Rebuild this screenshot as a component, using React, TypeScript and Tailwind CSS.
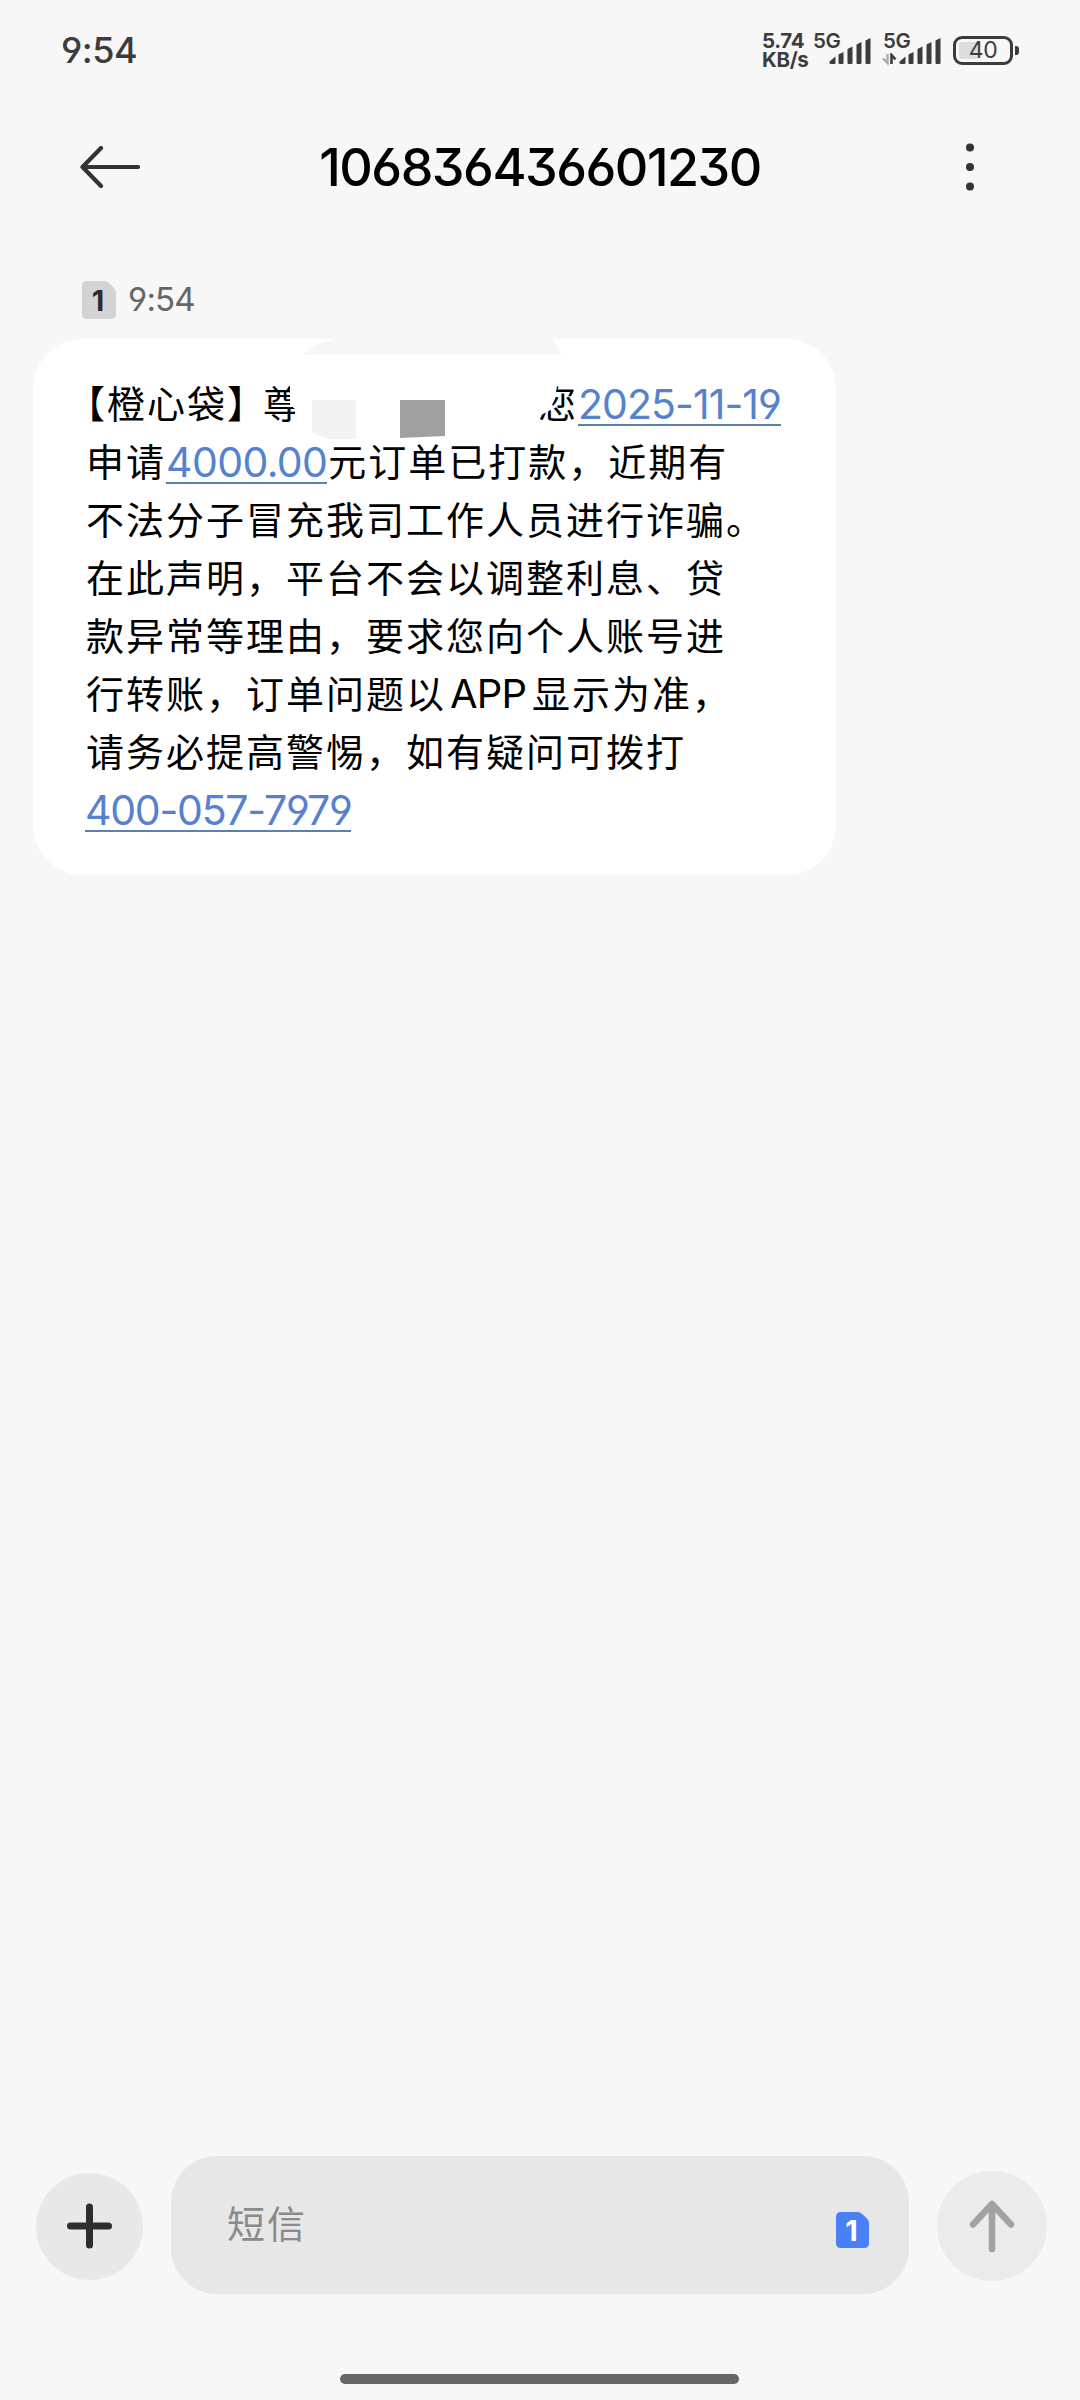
import { clsx } from 'clsx';

const LATIN = "font-['Inter','Noto_Sans_CJK_SC',sans-serif] [font-feature-settings:'cv03','cv04','cv09']";
const LINK = 'border-b-2 border-[#5c80b4] text-[#5681cf] text-[41px] leading-[40px] whitespace-nowrap';

function SignalBars() {
  return (
    <svg width="42" height="28" viewBox="0 0 42 28" fill="#3c3c3c" className="absolute left-[15px] top-[4px]">
      <path d="M0.500 26v-1.500l6-5v6.500a1 1 0 0 1-1 1h-4a1 1 0 0 1-1-1z" />
      <path d="M9.500 17.500l5-2.500v11a1 1 0 0 1-1 1h-3a1 1 0 0 1-1-1z" />
      <path d="M18.500 12l5-2.500V26a1 1 0 0 1-1 1h-3a1 1 0 0 1-1-1z" />
      <path d="M27.500 7.500l5-2.500v21a1 1 0 0 1-1 1h-3a1 1 0 0 1-1-1z" />
      <path d="M36.500 3.500l5-2.500v25a1 1 0 0 1-1 1h-3a1 1 0 0 1-1-1z" />
    </svg>
  );
}

function Signal({ data }: { data?: boolean }) {
  return (
    <div className="relative h-[34px] w-[57px]">
      <span className="absolute -left-[1px] -top-[1px] text-[20.5px] font-semibold leading-[18px] tracking-[-0.5px]">5G</span>
      {data && (
        <svg width="16" height="12" viewBox="0 0 16 12" className="absolute -left-[2px] top-[20px]">
          <path d="M5.500 1v9L1 5.500" stroke="#aaa" strokeWidth="2.400" fill="none" />
          <path d="M9.500 11V2l4 4.500" stroke="#3c3c3c" strokeWidth="2.600" fill="none" />
        </svg>
      )}
      <SignalBars />
    </div>
  );
}

function StatusBar() {
  return (
    <div className="flex h-[100px] items-center justify-between pl-[61px] pr-[61px] text-[#3c3c3c]">
      <span className="text-[36px] font-medium leading-none tracking-[-0.5px]">9:54</span>
      <div className="flex items-center">
        <div className="w-[52px] whitespace-nowrap text-[20.5px] font-bold leading-[19px] tracking-[-0.3px]">
          <div>5.74</div>
          <div>KB/s</div>
        </div>
        <Signal />
        <div className="w-[13px]" />
        <Signal data />
        <div className="ml-[12px] flex items-center gap-[2px]">
          <div className="flex h-[29px] w-[60px] items-center justify-center rounded-[9px] border-3 border-[#3c3c3c] bg-linear-to-r from-[#dcdcdc] from-40% to-[#f7f7f7] to-40% bg-clip-content p-[3px] text-[23px] leading-none tracking-[-0.5px]">
            40
          </div>
          <div className="h-[9px] w-[4px] rounded-r-[3px] bg-[#3c3c3c]" />
        </div>
      </div>
    </div>
  );
}

function Header() {
  return (
    <div className="flex h-[134px] items-center justify-between px-[80px]">
      <svg width="60" height="42" viewBox="0 0 60 42" fill="none" stroke="#333" strokeWidth="4.200" strokeLinecap="round" strokeLinejoin="round">
        <path d="M21 2L2.500 21 21 40M3 21h55" />
      </svg>
      <h1 className="mt-[2px] whitespace-nowrap text-[52px] font-[450] leading-none tracking-[-1.5px] text-black">106836436601230</h1>
      <svg width="60" height="48" viewBox="0 0 60 48" fill="#333">
        <circle cx="30" cy="4.500" r="4" />
        <circle cx="30" cy="24" r="4" />
        <circle cx="30" cy="43.500" r="4" />
      </svg>
    </div>
  );
}

function SimBadge({ className, fill, size }: { className?: string; fill: string; size: string }) {
  return (
    <div className={clsx('relative flex items-center justify-center', className)}>
      <svg viewBox="0 0 34 38" preserveAspectRatio="none" className="absolute inset-0 h-full w-full" fill={fill}>
        <path d="M5 0h17q3 0 5 2l5 5q2 2 2 5v21q0 5-5 5H5q-5 0-5-5V5q0-5 5-5z" />
      </svg>
      <span className={clsx('relative -left-px font-bold leading-none', size)}>1</span>
    </div>
  );
}

function Line({ children }: { children: React.ReactNode }) {
  return <div className="flex h-[58px] items-center whitespace-nowrap">{children}</div>;
}

// Han text sits a little higher than the digits on the same row
function Han({ className, children }: { className?: string; children: React.ReactNode }) {
  return <span className={clsx('mb-[6px]', className)}>{children}</span>;
}

function Bubble() {
  return (
    <div className="relative ml-[33px] mt-[20px] h-[536px] w-[803px] rounded-[50px] bg-white pl-[53px] pt-[37px] font-['Noto_Sans_CJK_SC',sans-serif] text-[38px] leading-[58px] tracking-[2px] text-black">
      <Line>
        <Han className="-ml-[19px]">【橙心袋】</Han>
        <Han className="-ml-[4px]">尊</Han>
        <Han className="ml-[235px] w-[40px]">您</Han>
        <span className={clsx(LATIN, LINK, 'tracking-[-0.95px]')}>2025-11-19</span>
      </Line>
      <Line>
        <Han>申请</Han>
        <span className={clsx(LATIN, LINK, 'mr-[1px] tracking-[-0.6px]')}>4000.00</span>
        <Han>元订单已打款，近期有</Han>
      </Line>
      <Line><Han>不法分子冒充我司工作人员进行诈骗。</Han></Line>
      <Line><Han>在此声明，平台不会以调整利息、贷</Han></Line>
      <Line><Han>款异常等理由，要求您向个人账号进</Han></Line>
      <Line>
        <Han>行转账，订单问题以</Han>
        <span className={clsx(LATIN, 'mx-[4px] mb-[3px] w-[78px] text-[40px] tracking-[-0.8px]')}>APP</span>
        <Han>显示为准，</Han>
      </Line>
      <Line><Han>请务必提高警惕，如有疑问可拨打</Han></Line>
      <Line>
        <span className={clsx(LATIN, LINK, '-ml-[1px] tracking-[-1.25px]')}>400-057-7979</span>
      </Line>

      {/* smudged-out name */}
      <svg width="300" height="110" viewBox="0 0 300 110" className="absolute left-[250px] top-0">
        <path d="M20 16Q32 4 52 0H270L279 16Z" fill="#f7f7f7" />
        <path d="M7 40V66L12 70V92H250L258 76L266 72L272 60L275 40Z" fill="#fff" />
        <path d="M29 61H73V100H47Q36 98 29 93Z" fill="#f3f3f3" />
        <path d="M117 61H162V97L117 99Z" fill="#a0a0a0" />
      </svg>
    </div>
  );
}

function Composer() {
  return (
    <div className="flex h-[138px] items-center pl-[36px] pr-[33px]">
      <div className="mt-[2px] flex size-[107px] items-center justify-center rounded-full bg-[#e8e8e8]">
        <svg width="46" height="46" viewBox="0 0 46 46" stroke="#2e2e2e" strokeWidth="7" strokeLinecap="round">
          <path d="M22.500 4v38M3.500 23h38" />
        </svg>
      </div>
      <div className="ml-[28px] flex h-full w-[738px] items-center justify-between rounded-[46px] bg-[#e7e7e7] pl-[56px] pr-[40px]">
        <span className="mb-[6px] font-['Noto_Sans_CJK_SC',sans-serif] text-[38px] leading-none tracking-[2px] text-[#8a8a8a]">短信</span>
        <SimBadge className="mt-[10px] h-[36px] w-[33px] text-white" fill="#4a80f5" size="text-[29px]" />
      </div>
      <div className="ml-[28px] mt-[2px] flex size-[110px] items-center justify-center rounded-full bg-[#ebebeb]">
        <svg width="46" height="54" viewBox="0 0 46 54" fill="none" stroke="#a2a2a2" strokeWidth="6.500" strokeLinecap="round" strokeLinejoin="round">
          <path d="M4 25.500L23 5l19 20.500M23 6v44" />
        </svg>
      </div>
    </div>
  );
}

export default function App() {
  return (
    <div className={clsx('flex h-[2400px] w-[1080px] flex-col overflow-hidden bg-[#f7f7f7]', LATIN)}>
      <StatusBar />
      <Header />
      <div className="mt-[47px] flex h-[38px] items-center pl-[82px]">
        <SimBadge className="h-[38px] w-[34px] text-[#2b2b2b]" fill="#d3d3d3" size="text-[29px]" />
        <span className="mb-[2px] ml-[12px] text-[33px] leading-none tracking-[-0.8px] text-[#666]">9:54</span>
      </div>
      <Bubble />
      <div className="flex-1" />
      <Composer />
      <div className="mb-[16px] ml-[340px] mt-[80px] h-[10px] w-[399px] rounded-full bg-[#666]" />
    </div>
  );
}
